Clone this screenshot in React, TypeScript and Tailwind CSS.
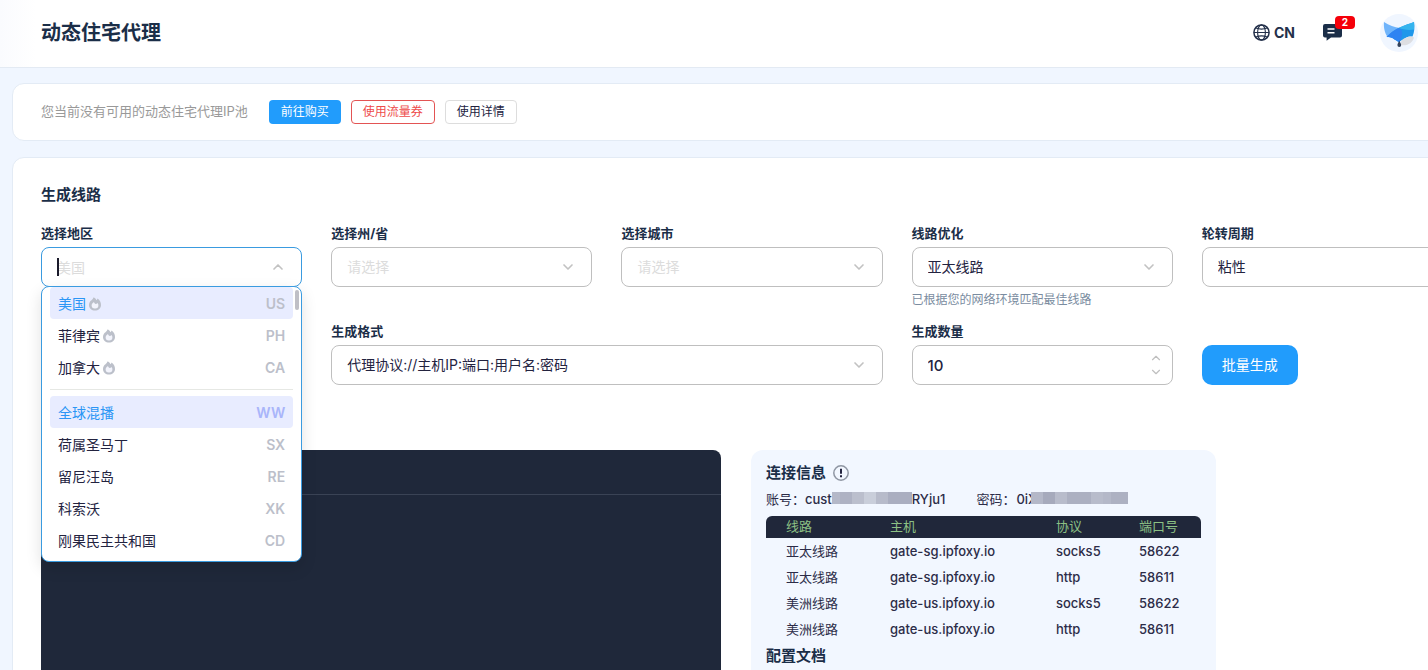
import { ChevronDown, ChevronUp } from "lucide-react";
import type { ReactNode } from "react";

const hotRegions = [
  { name: "美国", code: "US", active: true },
  { name: "菲律宾", code: "PH", active: false },
  { name: "加拿大", code: "CA", active: false },
];

const allRegions = [
  { name: "全球混播", code: "WW", active: true },
  { name: "荷属圣马丁", code: "SX", active: false },
  { name: "留尼汪岛", code: "RE", active: false },
  { name: "科索沃", code: "XK", active: false },
  { name: "刚果民主共和国", code: "CD", active: false },
];

const gateways = [
  { line: "亚太线路", host: "gate-sg.ipfoxy.io", protocol: "socks5", port: "58622" },
  { line: "亚太线路", host: "gate-sg.ipfoxy.io", protocol: "http", port: "58611" },
  { line: "美洲线路", host: "gate-us.ipfoxy.io", protocol: "socks5", port: "58622" },
  { line: "美洲线路", host: "gate-us.ipfoxy.io", protocol: "http", port: "58611" },
];

function GlobeIcon() {
  return (
    <svg width="17" height="17" viewBox="0 0 17 17" fill="none" stroke="currentColor" strokeWidth="1.1" aria-hidden="true">
      <circle cx="8.5" cy="8.5" r="7.6" strokeWidth="1.5" />
      <ellipse cx="8.5" cy="8.5" rx="3.9" ry="7.6" />
      <path d="M1 8.5h15M2.8 4c3.300 1.300 8.100 1.300 11.400 0M2.800 13c3.300-1.300 8.100-1.300 11.400 0" />
    </svg>
  );
}

function MessageIcon() {
  return (
    <svg width="19" height="17" viewBox="0 0 19 17" aria-hidden="true">
      <path d="M2 0h15a2 2 0 0 1 2 2v9.500a2 2 0 0 1-2 2H8L3.600 16.800v-3.300H2a2 2 0 0 1-2-2V2a2 2 0 0 1 2-2z" fill="#1b2e48" />
      <path d="M4.500 5h7M4.500 8.700h7" stroke="#fff" strokeWidth="1.500" />
    </svg>
  );
}

function FoxLogo() {
  return (
    <svg width="38" height="40" viewBox="0 0 38 40" aria-hidden="true">
      <circle cx="19" cy="20" r="19" fill="#f0f6ff" />
      <path d="M4 9c5 3.500 10.500 5 16 6-5 3-9.500 6.500-12 9.500C4.500 20 3.500 14 4 9z" fill="#6fb4fb" />
      <path d="M34 9c-8 3-19 6-27.500 15 3 0 6 .5 8 2.500 1.800 1 3 2 4.500 3 1-1.500 2.500-2.500 4.500-3 2-2.500 5.500-3.500 9-3C34.500 19 34.800 14 34 9z" fill="#1f97ea" />
      <path d="M34 9c-5 2-10.500 3.500-15.500 6 4.500 1.500 10 2.500 15.500 1.500.2-2.500.2-5 0-7.500z" fill="#35b4ee" />
      <path d="M6.500 24C10 20 14 17.200 18.500 15c4.500 1.500 5 6 1 14.500-2-1.500-3-2.500-5-3-2-2-5-2.500-8-2.500z" fill="#2f83f2" />
      <path d="M20.500 32c0-4 2.500-7 6-7 2-1.800 5-1.800 7.500-.5-1.500 5.500-7 9-13.500 7.500z" fill="#dddee2" />
      <path d="M19.300 27.500c.4 1.800 1.900 3 1.900 4.600a1.900 1.900 0 0 1-3.800 0c0-1.600 1.500-2.800 1.900-4.600z" fill="#34435c" />
    </svg>
  );
}

function FireIcon() {
  return (
    <svg width="12" height="14" viewBox="0 0 12 14" aria-hidden="true">
      <path d="M4.300.600C6 .900 7 1.900 7.400 3.200c.600-.300 1-.900 1.100-1.700C10.800 2.800 12 5.200 12 7.900 12 11.200 9.300 13.600 6 13.600S0 11.200 0 7.900C0 5.700 1 4.200 2.500 3.200 3.500 2.500 4.200 1.700 4.300.600z" fill="#bcc0ca" />
      <path d="M5 4.900c.200 1.100.900 1.800 1.700 2 .800 0 1.400-.4 1.700-1 .700.700 1 1.500 1 2.300A3.300 3.300 0 0 1 6 11.500a3.300 3.300 0 0 1-3.400-3.200C2.600 6.900 3.600 5.700 5 4.900z" fill="#f3f4fc" />
    </svg>
  );
}

function Field({ label, id, className = "", children }: { label: string; id: string; className?: string; children: ReactNode }) {
  return (
    <div className={className}>
      <label htmlFor={id} className="block text-[13px] leading-5 font-bold text-[#1b2e48]">
        {label}
      </label>
      <div className="relative mt-1">{children}</div>
    </div>
  );
}

function SelectBox({ id, value, muted = false }: { id: string; value: string; muted?: boolean }) {
  return (
    <>
      <select
        id={id}
        className={`block h-10 w-full appearance-none rounded-lg border border-[#bfbfbf] bg-white px-[15px] text-sm outline-none ${
          muted ? "text-[#dcdcdc]" : "text-[#23233f]"
        }`}
      >
        <option>{value}</option>
      </select>
      <ChevronDown strokeWidth={2.5} className="pointer-events-none absolute top-3 right-4 size-4 text-[#c2c2c2]" />
    </>
  );
}

function RegionItem({ name, code, active, hot = false }: { name: string; code: string; active: boolean; hot?: boolean }) {
  return (
    <li
      role="option"
      aria-selected={active}
      className={`flex h-8 items-center rounded px-2 pt-[2px] text-sm ${active ? "bg-[#e8ecff] text-[#2b96f5]" : "text-[#23233f]"}`}
    >
      <span className="mr-[3px]">{name}</span>
      {hot && <FireIcon />}
      <span className={`ml-auto font-semibold ${active && !hot ? "text-[#a9b5fa]" : "text-[#bcbfca]"}`}>{code}</span>
    </li>
  );
}

function RegionMenu() {
  return (
    <div className="absolute inset-x-0 top-full z-10 -mt-px rounded-lg border border-[#3a9be0] bg-white px-2 pb-[5px] shadow-[0_6px_16px_rgba(0,0,0,0.12)]">
      <ul role="listbox" aria-label="热门地区">
        {hotRegions.map((region) => (
          <RegionItem key={region.code} {...region} hot />
        ))}
      </ul>
      <hr className="my-[6px] border-t border-[#e6e8e4]" />
      <ul role="listbox" aria-label="全部地区">
        {allRegions.map((region) => (
          <RegionItem key={region.code} {...region} />
        ))}
      </ul>
      <span className="absolute top-[3px] right-[2px] h-5 w-1 rounded-full bg-[#bfbfc6]" />
    </div>
  );
}

function Header() {
  return (
    <header className="flex h-[68px] items-center justify-between border-b border-[#e3eaf3] bg-linear-to-r from-[#fafbfe] to-white to-[36px] pr-[10px] pb-[2px] pl-[41px]">
      <h1 className="text-xl font-bold text-[#1b2e48]">动态住宅代理</h1>
      <div className="flex items-center">
        <button type="button" className="flex items-center gap-1 text-sm font-bold text-[#23304a]">
          <GlobeIcon />
          CN
        </button>
        <button type="button" aria-label="消息" className="relative mr-[38px] ml-7">
          <MessageIcon />
          <span className="absolute -top-2 left-3 flex h-[13px] w-5 items-center justify-center rounded bg-[#f5000a] text-[10px] font-bold text-white">
            2
          </span>
        </button>
        <button type="button" aria-label="账户">
          <FoxLogo />
        </button>
      </div>
    </header>
  );
}

function NoticeBar() {
  return (
    <section className="flex h-[58px] items-center rounded-xl border border-[#e3ebf5] bg-white px-7 text-xs">
      <p className="mr-[21px] text-[13px] text-[#999999]">您当前没有可用的动态住宅代理IP池</p>
      <div className="flex gap-[10px]">
        <button type="button" className="h-6 w-[72px] rounded bg-[#219cfc] text-white">前往购买</button>
        <button type="button" className="h-6 w-[84px] rounded border border-[#e35454] text-[#ee4b4b]">使用流量券</button>
        <button type="button" className="h-6 w-[72px] rounded border border-[#dddddd] text-[#23233f]">使用详情</button>
      </div>
    </section>
  );
}

function ConnectionInfo() {
  return (
    <section className="w-[465px] shrink-0 rounded-t-xl bg-[#f2f7ff] px-[15px] pt-[13px] pb-10 text-[13px] text-[#2c2c48]">
      <h3 className="flex h-5 items-center gap-[7px] text-[15px] font-bold text-[#1b2e48]">
        连接信息
        <svg width="16" height="16" viewBox="0 0 16 16" fill="none" aria-hidden="true">
          <circle cx="8" cy="8" r="7.200" stroke="#8f96a3" strokeWidth="1.500" />
          <path d="M8 3.800v5M8 10.300v2" stroke="#23233f" strokeWidth="2" />
        </svg>
      </h3>
      <div className="mt-[7px] flex h-5 items-center font-medium">
        <span className="w-[39px] font-normal">账号：</span>
        <span>cust</span>
        <span className="mb-1 flex h-3 w-20 bg-[#b4b8c8]">
          <span className="ml-2 w-3 bg-[#aeb2c3]" />
          <span className="w-3 bg-[#bbbfcd]" />
          <span className="w-3 bg-[#c9ceda]" />
          <span className="w-3 bg-[#b7bbca]" />
          <span className="w-6 bg-[#aaaec0]" />
        </span>
        <span>RYju1</span>
        <span className="ml-[31px] w-10 font-normal">密码：</span>
        <span>0iX</span>
        <span className="mb-1 -ml-[6px] flex h-3 w-[97px] bg-[#b4b8c8]">
          <span className="ml-3 w-3 bg-[#a6aabc]" />
          <span className="w-3 bg-[#b8bccb]" />
          <span className="w-6 bg-[#acb0c1]" />
          <span className="w-3 bg-[#b8bccb]" />
          <span className="ml-2 flex-1 bg-[#adb1c2]" />
        </span>
      </div>
      <table className="mt-[6px] w-full table-fixed text-left">
        <colgroup>
          <col className="w-[104px]" />
          <col className="w-[166px]" />
          <col className="w-[83px]" />
          <col />
        </colgroup>
        <thead>
          <tr className="h-[22px] text-[#8cc084] *:bg-[#20273a] *:p-0 *:pl-5 *:font-normal">
            <th className="rounded-tl-md">线路</th>
            <th>主机</th>
            <th>协议</th>
            <th className="rounded-tr-md">端口号</th>
          </tr>
        </thead>
        <tbody>
          {gateways.map((row) => (
            <tr key={row.host + row.port} className="h-[26px] font-medium *:p-0 *:pt-[2px] *:pl-5">
              <td className="font-normal">{row.line}</td>
              <td>{row.host}</td>
              <td>{row.protocol}</td>
              <td>{row.port}</td>
            </tr>
          ))}
        </tbody>
      </table>
      <h3 className="mt-1 text-[15px] leading-5 font-bold text-[#1b2e48]">配置文档</h3>
    </section>
  );
}

function GeneratorForm() {
  return (
    <form className="mt-[18px] grid grid-cols-5 gap-x-[29px] gap-y-[11px]">
      <Field label="选择地区" id="region">
        <input
          id="region"
          type="text"
          role="combobox"
          aria-expanded="true"
          placeholder="美国"
          className="block h-10 w-full rounded-lg border border-[#3a9be0] bg-white px-[15px] text-sm outline-none placeholder:text-[#dcdcdc]"
        />
        <span className="absolute top-[11px] left-4 h-[18px] w-[2px] bg-[#1a1a2b]" />
        <ChevronUp strokeWidth={2.5} className="pointer-events-none absolute top-3 right-4 size-4 text-[#c2c2c2]" />
        <RegionMenu />
      </Field>
      <Field label="选择州/省" id="state">
        <SelectBox id="state" value="请选择" muted />
      </Field>
      <Field label="选择城市" id="city">
        <SelectBox id="city" value="请选择" muted />
      </Field>
      <Field label="线路优化" id="line">
        <SelectBox id="line" value="亚太线路" />
        <p className="mt-[3px] text-xs leading-5 text-[#7a8ca0]">已根据您的网络环境匹配最佳线路</p>
      </Field>
      <Field label="轮转周期" id="rotation">
        <SelectBox id="rotation" value="粘性" />
      </Field>
      <Field label="生成格式" id="format" className="col-span-2 col-start-2">
        <SelectBox id="format" value="代理协议://主机IP:端口:用户名:密码" />
      </Field>
      <Field label="生成数量" id="amount">
        <input
          id="amount"
          type="text"
          inputMode="numeric"
          defaultValue="10"
          className="block h-10 w-full rounded-lg border border-[#bfbfbf] bg-white px-[15px] text-[15px] font-medium text-[#23233f] outline-none"
        />
        <div className="absolute inset-y-0 right-2 flex flex-col justify-center text-[#bfbfbf]">
          <button type="button" aria-label="增加">
            <ChevronUp className="h-[14px] w-[18px]" />
          </button>
          <button type="button" aria-label="减少">
            <ChevronDown className="h-[14px] w-[18px]" />
          </button>
        </div>
      </Field>
      <button type="button" className="h-10 w-24 self-end rounded-[10px] bg-[#219cfc] text-sm text-white">
        批量生成
      </button>
    </form>
  );
}

export default function App() {
  return (
    <div className="h-screen overflow-hidden bg-[#f0f6ff] font-['Inter','Noto_Sans_CJK_SC',sans-serif]">
      <Header />
      {/* the work area runs on past the right edge of the window */}
      <main className="-mr-16 flex flex-col gap-4 pt-[15px] pl-3">
        <NoticeBar />
        <section className="rounded-xl border border-[#e3ebf5] bg-white px-7 pt-[27px]">
          <h2 className="text-[15px] leading-5 font-bold text-[#1b2e48]">生成线路</h2>
          <GeneratorForm />
          <div className="mt-[65px] flex gap-[30px]">
            <div className="max-w-[680px] flex-1 rounded-t-lg bg-[#1f283a]">
              <div className="h-[45px] border-b border-[#3a4355]" />
            </div>
            <ConnectionInfo />
          </div>
        </section>
      </main>
    </div>
  );
}
